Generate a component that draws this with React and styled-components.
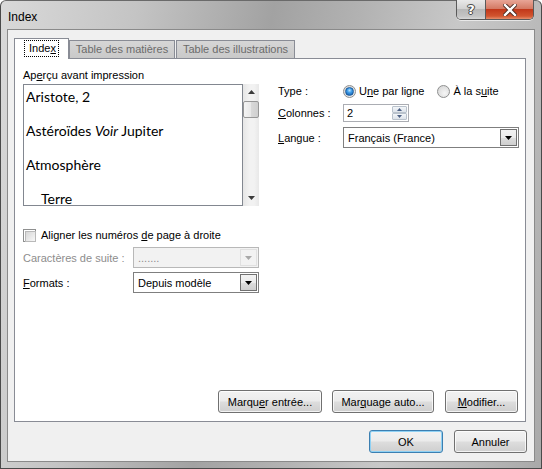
import React from 'react';
import styled, { createGlobalStyle, css } from 'styled-components';

const Global = createGlobalStyle`
  html, body { margin: 0; padding: 0; background: #fff; }
  body { font-family: "Liberation Sans", Arial, sans-serif; font-size: 11px; color: #000; }
  * { box-sizing: border-box; }
`;

const Window = styled.div`
  position: relative;
  width: 542px;
  height: 469px;
  border: 1px solid #4a4a4a;
  border-top-color: #6a6a6a;
  border-radius: 6px 6px 0 0;
  background: linear-gradient(100deg, #d9d9d9 0%, #c4c4c4 22%, #a2a2a2 44%, #b2b2b2 58%, #c8c8c8 74%, #b9b9b9 88%, #a9a9a9 100%);
  display: flex;
  flex-direction: column;
  padding: 0 6px 6px 6px;
`;

const TitleBar = styled.div`
  height: 28px;
  display: flex;
  align-items: center;
`;

const Title = styled.div`
  margin-left: 1px;
  padding-top: 3px;
  font-size: 12px;
  color: #000;
`;

const Caption = styled.div`
  margin-left: auto;
  margin-right: 1px;
  align-self: flex-start;
  margin-top: -1px;
  display: flex;
  height: 20px;
  border: 1px solid #5a5a5a;
  border-top: none;
  border-radius: 0 0 5px 5px;
  overflow: hidden;
  box-shadow: 0 1px 0 rgba(255,255,255,0.6);
`;

const CapBtn = styled.div`
  width: ${p => p.$w}px;
  height: 19px;
  display: flex;
  align-items: center;
  justify-content: center;
  ${p => p.$close ? css`
    background: linear-gradient(#e8a596 0%, #d47a64 45%, #c2381a 50%, #d2552f 85%, #e68f6c 100%);
  ` : css`
    background: linear-gradient(#e9e9e9 0%, #d2d2d2 45%, #b8b8b8 50%, #c4c4c4 85%, #d8d8d8 100%);
    border-right: 1px solid #5a5a5a;
  `}
`;

const HelpGlyph = styled.span`
  font-family: "DejaVu Sans", sans-serif;
  font-weight: bold;
  font-size: 13px;
  color: #fff;
  text-shadow: 0 0 1px #333, 0 0 1px #333, 1px 0 0 #555, -1px 0 0 #555, 0 1px 0 #555, 0 -1px 0 #555;
  line-height: 1;
`;

const Client = styled.div`
  flex: 1;
  border: 1px solid #8a8a8a;
  background: #f0f0f0;
  display: flex;
  flex-direction: column;
  padding: 8px 8px 8px 6px;
`;

const TabStrip = styled.div`
  height: 20px;
  display: flex;
  align-items: flex-end;
  position: relative;
  z-index: 1;
`;

const Tab = styled.div`
  width: ${p => p.$w}px;
  margin-right: ${p => p.$mr || 0}px;
  display: flex;
  align-items: center;
  justify-content: center;
  border: 1px solid #898c95;
  border-bottom: none;
  ${p => p.$active ? css`
    height: 21px;
    margin-bottom: -1px;
    background: #fff;
    color: #000;
    padding-bottom: 2px;
  ` : css`
    height: 18px;
    background: linear-gradient(#d6d6d6, #c9c9c9);
    color: #6b6b6b;
    padding-bottom: 1px;
  `}
`;

const Focus = styled.span`
  outline: 1px dotted #000;
  outline-offset: 0;
  padding: 1px 2px 2px 4px;
`;

const U = styled.span`
  text-decoration: underline;
  text-underline-offset: 1px;
`;

const Panel = styled.div`
  height: 364px;
  border: 1px solid #898c95;
  background: #fff;
  display: flex;
  flex-direction: column;
  padding: 9px 6px 8px 8px;
`;

const TopSection = styled.div`
  display: flex;
`;

const LeftCol = styled.div`
  width: 236px;
  display: flex;
  flex-direction: column;
`;

const RightCol = styled.div`
  margin-left: 19px;
  flex: 1;
  padding-top: 15px;
  display: flex;
  flex-direction: column;
`;

const GroupCaption = styled.div`
  height: 14px;
  line-height: 14px;
  margin-bottom: 2px;
`;

const PreviewRow = styled.div`
  height: 122px;
  display: flex;
`;

const PreviewBox = styled.div`
  width: 220px;
  border: 1px solid #828790;
  overflow: hidden;
  padding: 3px 0 0 2px;
  font-family: Lato, "Open Sans", sans-serif;
  font-size: 14px;
`;

const Entry = styled.div`
  height: 34px;
  line-height: 17px;
  padding-left: ${p => p.$indent ? 15 : 0}px;
  white-space: nowrap;
`;

const Scrollbar = styled.div`
  width: 16px;
  display: flex;
  flex-direction: column;
  background: linear-gradient(90deg, #e6e6e6, #f2f2f2 40%, #f2f2f2 70%, #e8e8e8);
`;

const ScrollArrow = styled.div`
  height: 16px;
  display: flex;
  align-items: center;
  justify-content: center;
`;

const Thumb = styled.div`
  margin: 1px 0 0 0;
  height: 17px;
  border: 1px solid #979797;
  border-radius: 2px;
  background: linear-gradient(90deg, #f4f4f4 0%, #e8e8e8 50%, #d9d9d9 51%, #cfcfcf 100%);
`;

const Track = styled.div`
  flex: 1;
`;

const CheckRow = styled.div`
  margin-top: 21px;
  height: 16px;
  display: flex;
  align-items: center;
`;

const CheckBox = styled.div`
  width: 13px;
  height: 13px;
  border: 1px solid #8e8f8f;
  background: #fff;
  padding: 1px;
  margin-right: 5px;
  &::after {
    content: '';
    display: block;
    width: 100%;
    height: 100%;
    border: 1px solid #b9b9b9;
    background: linear-gradient(135deg, #d6d6d6, #f8f8f8);
  }
`;

const FieldRow = styled.div`
  margin-top: ${p => p.$mt}px;
  height: ${p => p.$h}px;
  display: flex;
  align-items: center;
`;

const FieldLabel = styled.div`
  width: ${p => p.$w}px;
  flex: none;
  color: ${p => p.$disabled ? '#8d8d8d' : '#000'};
`;

const Combo = styled.div`
  width: ${p => p.$w}px;
  height: 21px;
  border: 1px solid ${p => p.$disabled ? '#b8b8b8' : '#7f7f7f'};
  background: ${p => p.$disabled ? '#f2f2f2' : '#fff'};
  color: ${p => p.$disabled ? '#8d8d8d' : '#000'};
  display: flex;
  align-items: center;
  padding: 1px;
`;

const ComboText = styled.div`
  flex: 1;
  padding-left: 3px;
  white-space: nowrap;
`;

const DropBtn = styled.div`
  width: 17px;
  height: 17px;
  display: flex;
  align-items: center;
  justify-content: center;
  ${p => p.$disabled ? css`
    border: 1px solid #e0e0e0;
    background: #f2f2f2;
  ` : css`
    border: 1px solid #707070;
    background: linear-gradient(#f2f2f2 0%, #ebebeb 50%, #dddddd 51%, #cfcfcf 100%);
  `}
`;

const Radio = styled.div`
  width: 13px;
  height: 13px;
  border-radius: 50%;
  border: 1px solid #8e8f8f;
  background: radial-gradient(circle at 60% 65%, #f6f6f6 0%, #dcdcdc 70%);
  display: flex;
  align-items: center;
  justify-content: center;
  margin-right: 3px;
  flex: none;
  &::after {
    content: '';
    display: ${p => p.$checked ? 'block' : 'none'};
    width: 7px;
    height: 7px;
    border-radius: 50%;
    background: radial-gradient(circle at 50% 35%, #b7e3ff 0%, #3c9be8 40%, #0e4f9c 100%);
    border: 1px solid #1d5d9e;
  }
`;

const RadioLabel = styled.span`
  margin-right: ${p => p.$mr || 0}px;
`;

const Spin = styled.div`
  width: 66px;
  height: 18px;
  border: 1px solid #abadb3;
  background: #fff;
  display: flex;
  align-items: stretch;
  padding: 1px;
`;

const SpinText = styled.div`
  flex: 1;
  padding-left: 2px;
  display: flex;
  align-items: center;
`;

const SpinBtns = styled.div`
  width: 15px;
  display: flex;
  flex-direction: column;
`;

const SpinBtn = styled.div`
  flex: 1;
  border: 1px solid #b9c2cc;
  border-radius: 1px;
  background: linear-gradient(#f3f6f9, #dde3ea);
  display: flex;
  align-items: center;
  justify-content: center;
`;

const Spacer = styled.div`
  flex: 1;
`;

const ButtonRow = styled.div`
  display: flex;
  justify-content: flex-end;
  margin-right: ${p => p.$mr || 0}px;
  margin-top: ${p => p.$mt || 0}px;
`;

const Button = styled.div`
  width: ${p => p.$w}px;
  margin-left: ${p => p.$ml || 0}px;
  height: 23px;
  border: 1px solid ${p => p.$default ? '#3c7fb1' : '#707070'};
  border-radius: 3px;
  background: linear-gradient(#f2f2f2 0%, #ebebeb 48%, #dddddd 52%, #cfcfcf 100%);
  box-shadow: inset 0 0 0 1px ${p => p.$default ? '#8fd1f4' : 'rgba(255,255,255,0.75)'};
  display: flex;
  align-items: center;
  justify-content: center;
  white-space: nowrap;
`;

const Tri = ({ dir = 'down', color = '#000', w = 7, h = 4 }) => (
  <svg width={w} height={h} viewBox={`0 0 ${w} ${h}`}>
    {dir === 'down'
      ? <polygon points={`0,0 ${w},0 ${w / 2},${h}`} fill={color} />
      : <polygon points={`0,${h} ${w},${h} ${w / 2},0`} fill={color} />}
  </svg>
);

const CloseGlyph = () => (
  <svg width="14" height="12" viewBox="0 0 14 12">
    <path d="M2 1 L12 11 M12 1 L2 11" stroke="#4a2a22" strokeWidth="4.2" strokeLinecap="square" />
    <path d="M2 1 L12 11 M12 1 L2 11" stroke="#fff" strokeWidth="2.4" strokeLinecap="square" />
  </svg>
);

export default function App() {
  return (
    <>
      <Global />
      <Window>
        <TitleBar>
          <Title>Index</Title>
          <Caption>
            <CapBtn $w={29}><HelpGlyph>?</HelpGlyph></CapBtn>
            <CapBtn $w={47} $close><CloseGlyph /></CapBtn>
          </Caption>
        </TitleBar>
        <Client>
          <TabStrip>
            <Tab $w={55} $active><Focus>Inde<U>x</U></Focus></Tab>
            <Tab $w={106} $mr={1}>Table des matières</Tab>
            <Tab $w={119}>Table des illustrations</Tab>
          </TabStrip>
          <Panel>
            <TopSection>
              <LeftCol>
                <GroupCaption>Ap<U>e</U>rçu avant impression</GroupCaption>
                <PreviewRow>
                  <PreviewBox>
                    <Entry>Aristote, 2</Entry>
                    <Entry>Astéroïdes <i>Voir</i> Jupiter</Entry>
                    <Entry>Atmosphère</Entry>
                    <Entry $indent>Terre</Entry>
                  </PreviewBox>
                  <Scrollbar>
                    <ScrollArrow><Tri dir="up" color="#3c3c3c" /></ScrollArrow>
                    <Thumb />
                    <Track />
                    <ScrollArrow><Tri dir="down" color="#3c3c3c" /></ScrollArrow>
                  </Scrollbar>
                </PreviewRow>
                <CheckRow>
                  <CheckBox />
                  <span>Aligner les numéros <U>d</U>e page à droite</span>
                </CheckRow>
                <FieldRow $mt={4} $h={21}>
                  <FieldLabel $w={110} $disabled>Caractères de suite :</FieldLabel>
                  <Combo $w={126} $disabled>
                    <ComboText>.......</ComboText>
                    <DropBtn $disabled><Tri color="#a8a8a8" /></DropBtn>
                  </Combo>
                </FieldRow>
                <FieldRow $mt={4} $h={21}>
                  <FieldLabel $w={110}><U>F</U>ormats :</FieldLabel>
                  <Combo $w={126}>
                    <ComboText>Depuis modèle</ComboText>
                    <DropBtn><Tri /></DropBtn>
                  </Combo>
                </FieldRow>
              </LeftCol>
              <RightCol>
                <FieldRow $mt={0} $h={16}>
                  <FieldLabel $w={65}>Type :</FieldLabel>
                  <Radio $checked />
                  <RadioLabel $mr={13}>U<U>n</U>e par ligne</RadioLabel>
                  <Radio />
                  <RadioLabel>À la s<U>u</U>ite</RadioLabel>
                </FieldRow>
                <FieldRow $mt={5} $h={18}>
                  <FieldLabel $w={65}><U>C</U>olonnes :</FieldLabel>
                  <Spin>
                    <SpinText>2</SpinText>
                    <SpinBtns>
                      <SpinBtn><Tri dir="up" color="#4d6185" w={5} h={3} /></SpinBtn>
                      <SpinBtn><Tri color="#4d6185" w={5} h={3} /></SpinBtn>
                    </SpinBtns>
                  </Spin>
                </FieldRow>
                <FieldRow $mt={5} $h={21}>
                  <FieldLabel $w={65}><U>L</U>angue :</FieldLabel>
                  <Combo $w={176}>
                    <ComboText>Français (France)</ComboText>
                    <DropBtn><Tri /></DropBtn>
                  </Combo>
                </FieldRow>
              </RightCol>
            </TopSection>
            <Spacer />
            <ButtonRow $mr={1}>
              <Button $w={104}>Marqu<U>e</U>r entrée...</Button>
              <Button $w={102} $ml={10}>Mar<U>q</U>uage auto...</Button>
              <Button $w={73} $ml={11}><U>M</U>odifier...</Button>
            </ButtonRow>
          </Panel>
          <ButtonRow $mt={8} $mr={-1}>
            <Button $w={74} $default>OK</Button>
            <Button $w={73} $ml={11}>Annuler</Button>
          </ButtonRow>
        </Client>
      </Window>
    </>
  );
}
